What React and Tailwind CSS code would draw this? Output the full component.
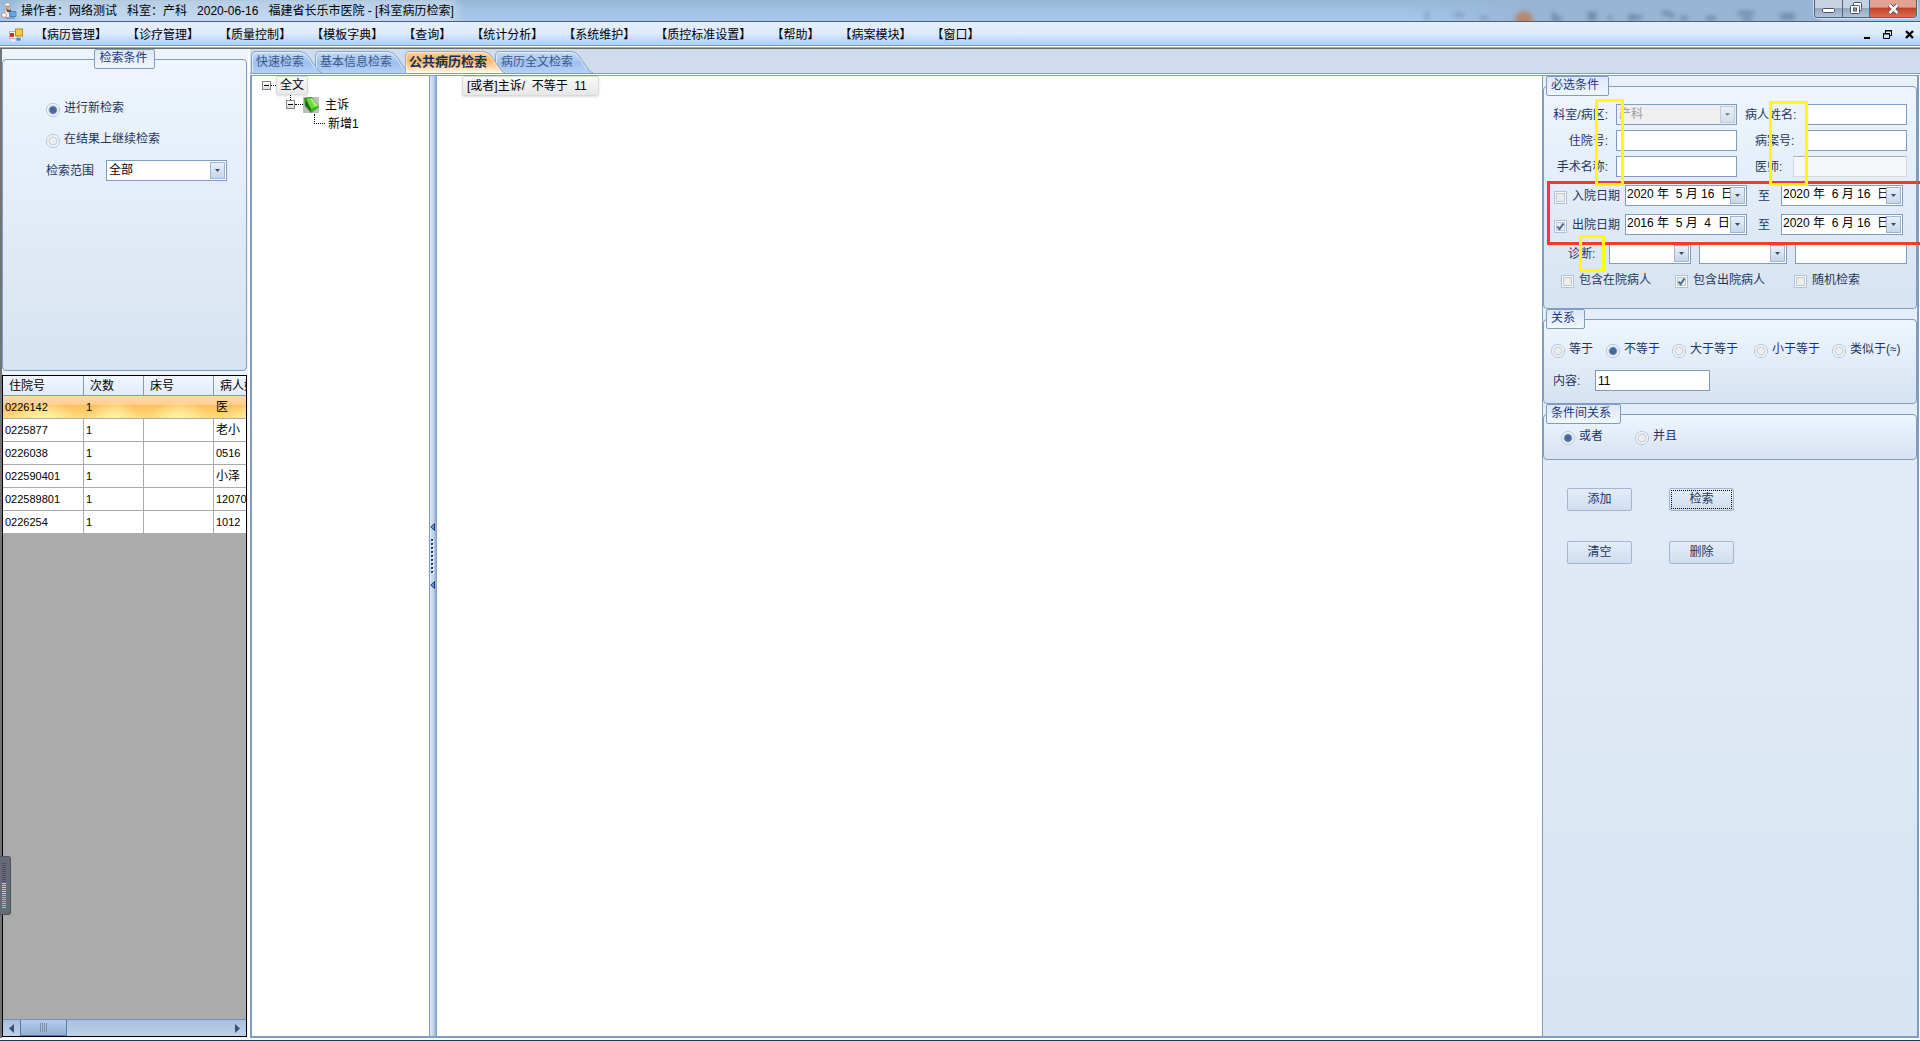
import React from "react";

const MENUS = ["病历管理", "诊疗管理", "质量控制", "模板字典", "查询", "统计分析", "系统维护", "质控标准设置", "帮助", "病案模块", "窗口"];

const TABS = [
  { text: "快速检索", w: 71, cls: "z-20 w-[71px]", label: "pl-[5px]" },
  { text: "基本信息检索", w: 95, cls: "z-10 -ml-[7px] w-[95px]", label: "pl-[5px]" },
  { text: "公共病历检索", w: 100, cls: "z-30 -ml-[5px] w-[100px]", label: "pl-[4px] text-[13px] font-bold text-[#15305a]", active: true },
  { text: "病历全文检索", w: 98, cls: "z-0 -ml-[10px] w-[98px]", label: "pl-[6px]" },
];

const ROWS = [
  ["0226142", "1", "", "医"],
  ["0225877", "1", "", "老小"],
  ["0226038", "1", "", "0516"],
  ["022590401", "1", "", "小泽"],
  ["022589801", "1", "", "120701"],
  ["0226254", "1", "", "1012"],
];

function Tab({ tab }) {
  const { w } = tab;
  const id = tab.active ? "tabHot" : "tabCool";
  const stops = tab.active
    ? [["0", "#fbd0a0"], ["0.4", "#fdb767"], ["0.55", "#fdc27c"], ["1", "#fffaf2"]]
    : [["0", "#c6dbf7"], ["0.4", "#a9c9f3"], ["0.5", "#9dc0ef"], ["1", "#b4d2f5"]];
  return (
    <button type="button" role="tab" aria-selected={!!tab.active} className={`relative h-[22px] shrink-0 text-left ${tab.cls}`}>
      <svg aria-hidden="true" className="absolute inset-0" width={w} height="22" viewBox={`0 0 ${w} 22`}>
        <defs>
          <linearGradient id={id + w} x1="0" y1="0" x2="0" y2="1">
            {stops.map(([o, c]) => <stop key={o} offset={o} stopColor={c} />)}
          </linearGradient>
        </defs>
        <path
          d={`M0.5 22V5Q0.5 0.5 5 0.5H${w - 22}Q${w - 17} 0.5 ${w - 13} 6L${w - 5} 18Q${w - 3} 21 ${w} 22`}
          fill={`url(#${id + w})`} stroke={tab.active ? "#b0a6a0" : "#86a4cc"}
        />
        <path d={`M1.5 21V5Q2 1.5 5 1.5H${w - 22}Q${w - 18} 1.5 ${w - 14} 6.5L${w - 6} 18.5`} fill="none" stroke="#ffffff" strokeOpacity="0.6" />
      </svg>
      <span className={`relative block whitespace-nowrap text-[#3b5888] ${tab.label}`}>{tab.text}</span>
    </button>
  );
}

function Arrow() {
  return (
    <svg width="5" height="3" viewBox="0 0 5 3" aria-hidden="true"><path d="M0 0H5L2.5 3Z" fill="#3c4a5e" /></svg>
  );
}

const arrowBox = "flex w-[15px] shrink-0 items-center justify-center border border-[#9db6d8] bg-linear-to-b from-[#e8f0fa] to-[#c5d6ea]";

function Select({ width, value = "", disabled, label, id }) {
  return (
    <div className={`relative h-[21px] shrink-0 ${width}`}>
      <select
        id={id} aria-label={label} disabled={disabled} defaultValue={value}
        className="h-full w-full appearance-none border border-[#7f9dc1] bg-white pl-[2px] text-[12px] leading-[17px] text-black disabled:bg-[#efefef] disabled:text-[#a0a0a0] disabled:opacity-100"
      >
        <option value={value}>{value}</option>
      </select>
      <span className={`pointer-events-none absolute inset-y-[2px] right-[2px] ${arrowBox} ${disabled ? "opacity-60" : ""}`}><Arrow /></span>
    </div>
  );
}

function TextBox({ id, label, cls = "", value = "" }) {
  return (
    <input id={id} aria-label={label} type="text" defaultValue={value}
      className={`h-[21px] min-w-0 border border-[#7f9dc1] bg-white px-[2px] text-[12px] text-black ${cls}`} />
  );
}

function DateBox({ value, label }) {
  return (
    <div className="flex h-[21px] w-[122px] shrink-0 border border-[#7f9dc1] bg-white p-px">
      <input type="text" aria-label={label} defaultValue={value}
        className="min-w-0 flex-1 overflow-hidden pb-[3px] text-[12px] leading-[14px] text-black" />
      <button type="button" aria-label={`选择${label}`} className={arrowBox}><Arrow /></button>
    </div>
  );
}

function Radio({ name, text, checked, cls = "" }) {
  return (
    <label className={`flex shrink-0 items-start gap-1 whitespace-nowrap leading-4 ${cls}`}>
      <input
        type="radio" name={name} defaultChecked={checked}
        className="mt-[3px] size-[14px] shrink-0 appearance-none rounded-full border border-[#abc3e3] bg-[radial-gradient(circle,#ececec_0_3px,#c3c7cc_4px,#f8fafd_5px)] checked:bg-[radial-gradient(circle,#47689c_0_3px,#9fb2cd_4px,#f8fafd_5px)]"
      />
      <span>{text}</span>
    </label>
  );
}

function Check({ text, checked, cls = "" }) {
  return (
    <label className={`flex shrink-0 items-start gap-[5px] whitespace-nowrap leading-4 ${cls}`}>
      <span className="relative mt-[3px] size-[13px] shrink-0">
        <input type="checkbox" defaultChecked={checked}
          className="peer block size-[13px] appearance-none border border-[#abc3e3] bg-[#ececec] shadow-[inset_0_0_0_1px_#f8fafd,inset_0_0_0_2px_#c3c7cc]" />
        <svg className="pointer-events-none absolute inset-0 hidden peer-checked:block" width="13" height="13" viewBox="0 0 13 13" aria-hidden="true">
          <path d="M3.5 6.5L5.5 9L9.5 3.5" fill="none" stroke="#47689c" strokeWidth="2" />
        </svg>
      </span>
      <span>{text}</span>
    </label>
  );
}

function Group({ title, center, cls = "", children }) {
  return (
    <fieldset className={`min-w-0 rounded-[4px] border border-[#7f9dc1] bg-linear-to-b from-[#eef5fe] to-[#d7e3f1] ${cls}`}>
      <legend className={`h-5 rounded-[2px] border border-[#7f9dc1] bg-linear-to-b from-[#dde8f6] to-[#f1f6fd] pl-1 text-[12px] leading-[17px] text-[#1d3a80] ${center ? "mx-auto px-[6px]" : "ml-[2px] pr-[9px]"}`}>{title}</legend>
      {children}
    </fieldset>
  );
}

function Expander() {
  return (
    <button type="button" aria-label="折叠" className="flex size-[9px] shrink-0 items-center justify-center border border-[#848484] bg-linear-to-b from-white to-[#dcdcdc]">
      <span className="h-px w-[5px] bg-black" />
    </button>
  );
}

function TitleBar() {
  return (
    <header className="relative flex h-[22px] shrink-0 items-center overflow-hidden border-b border-[#4d5f78] bg-linear-to-b from-[#98b7d5] via-[#a2c2e5] to-[#a9c9ec]">
      <svg className="absolute right-[100px] top-0 h-[21px] w-[420px]" viewBox="0 0 420 21" aria-hidden="true">
        <defs>
          <filter id="soft" x="-20%" y="-20%" width="140%" height="140%"><feGaussianBlur stdDeviation="2" /></filter>
          <linearGradient id="shade"><stop offset="0" stopColor="#98b5d6" stopOpacity="0" /><stop offset="0.3" stopColor="#98b5d6" /></linearGradient>
        </defs>
        <rect width="420" height="21" fill="url(#shade)" />
        <g filter="url(#soft)" stroke="#5f7b9c" strokeWidth="4" fill="none" opacity="0.75">
          <path d="M27 12V20M54 15H64M80 18H88" opacity="0.6" />
          <circle cx="124" cy="20" r="9" fill="#c07a48" stroke="none" />
          <path d="M154 12V20L162 18M188 12L196 20M196 12L188 20M208 18H212M232 14V21M228 17H242M262 13H268L274 17M280 18H288M306 18H316M338 13H354M342 19H352" />
          <rect x="380" y="13" width="15" height="7" fill="#6b84a2" stroke="none" />
        </g>
      </svg>
      <svg className="relative ml-px shrink-0" width="16" height="17" viewBox="0 0 16 17" aria-hidden="true">
        <path d="M4 4Q6 1 9 3L9 7L5 7Z" fill="#d9a77c" />
        <path d="M3 3Q6 -1 9 2L9 4L4 4Z" fill="#fafafa" stroke="#8a7a78" strokeWidth="0.6" />
        <path d="M4 7L9 6L10 11L8 16L4 15Z" fill="#f4f4f6" stroke="#8f98a8" strokeWidth="0.6" />
        <path d="M5 7L10 8L10 10L6 10Z" fill="#7c3a2e" />
        <circle cx="3" cy="13" r="2.4" fill="#fff" stroke="#c25b5b" strokeWidth="0.7" />
        <path d="M8 9.500H15V14.500H9Z" fill="#5aa5e6" stroke="#2d6fae" strokeWidth="0.8" /><path d="M5 16H14" stroke="#6b7a8c" />
      </svg>
      <h1 className="relative ml-1 flex gap-[10px] whitespace-nowrap rounded-lg bg-white/30 text-[12px] font-normal leading-5 text-black shadow-[0_0_8px_4px_rgba(255,255,255,0.3)]">
        <span>操作者：网络测试</span><span>科室：产科</span><span>2020-06-16</span><span>福建省长乐市医院 - [科室病历检索]</span>
      </h1>
      <div className="relative mb-auto ml-auto mr-[3px] flex h-[18px] overflow-hidden rounded-b-[4px] border border-t-0 border-[#50617a] shadow-[0_0_0_1px_rgba(255,255,255,0.5)]">
        <button type="button" aria-label="最小化" className="flex w-[28px] items-center justify-center border-r border-[#50617a] bg-linear-to-b from-[#c5d2e2] from-45% via-[#94a8c1] via-50% to-[#b4c4d8]">
          <svg width="13" height="6" viewBox="0 0 13 6" className="mt-1"><rect x="0.5" y="0.5" width="12" height="4" rx="1" fill="#fff" stroke="#4b5568" /></svg>
        </button>
        <button type="button" aria-label="还原" className="flex w-[27px] items-center justify-center border-r border-[#50617a] bg-linear-to-b from-[#c5d2e2] from-45% via-[#94a8c1] via-50% to-[#b4c4d8]">
          <svg width="13" height="13" viewBox="0 0 13 13">
            <rect x="3.5" y="0.5" width="8" height="8" rx="1" fill="#fff" stroke="#4b5568" />
            <rect x="0.5" y="3.5" width="9" height="8" rx="1" fill="#fff" stroke="#4b5568" />
            <rect x="3.5" y="6" width="3" height="3" fill="#94a8c1" stroke="#4b5568" />
          </svg>
        </button>
        <button type="button" aria-label="关闭" className="flex w-[46px] items-center justify-center bg-linear-to-b from-[#e0a292] from-40% via-[#c4412b] via-50% to-[#d9704e]">
          <svg width="13" height="12" viewBox="0 0 13 12"><path d="M2.5 2L10.5 10M10.5 2L2.5 10" stroke="#5a4450" strokeWidth="4.5" /><path d="M2.5 2L10.5 10M10.5 2L2.5 10" stroke="#fff" strokeWidth="2.6" /></svg>
        </button>
      </div>
    </header>
  );
}

function MenuBar() {
  return (
    <nav className="flex h-[24px] shrink-0 items-center border-b border-[#7c9cc8] bg-linear-to-b from-[#e6effc] via-[#dcebfd] to-[#a9cdfb] pt-[2px]">
      <svg className="ml-[9px] shrink-0" width="14" height="14" viewBox="0 0 14 14" aria-hidden="true">
        <rect x="0.5" y="3.5" width="8" height="7" fill="#f6f6f6" stroke="#b9b9b9" /><rect x="1" y="5" width="4" height="4" fill="#d0301c" />
        <rect x="6.5" y="1" width="7" height="7" fill="#fbc93c" stroke="#b98a1a" />
        <rect x="7" y="9.5" width="5" height="3.5" fill="#4a86e8" stroke="#dfe7f5" strokeWidth="0.6" /><path d="M2 11.5H6V13.5H2Z" fill="#eee" />
      </svg>
      <ul className="ml-[12px] flex gap-5">
        {MENUS.map((m) => (
          <li key={m}><button type="button" className="block whitespace-nowrap text-[12px] leading-5 text-black">【{m}】</button></li>
        ))}
      </ul>
      <div className="ml-auto mr-[6px] flex items-end gap-[13px]">
        <button type="button" aria-label="最小化子窗口"><svg className="block" width="6" height="9" viewBox="0 0 6 9"><path d="M0 7H6V9H0Z" /></svg></button>
        <button type="button" aria-label="还原子窗口">
          <svg className="block" width="9" height="9" viewBox="0 0 9 9" fill="none" stroke="#000"><path d="M2.5 3V0.5H8.5V5.5H6.5M2 1H9M0.5 3.5H6.5V8.5H0.5ZM0 4H7" /></svg>
        </button>
        <button type="button" aria-label="关闭子窗口"><svg className="block" width="9" height="9" viewBox="0 0 9 9"><path d="M1 1L8 8M8 1L1 8" stroke="#000" strokeWidth="2.4" /></svg></button>
      </div>
    </nav>
  );
}

function LeftPane() {
  return (
    <section className="flex w-[248px] shrink-0 flex-col border-l-2 border-[#707478] bg-[#eef4fc] pb-px pr-px">
      <Group title="检索条件" center cls="h-[322px]">
        <div className="flex flex-col items-start pl-[43px] pt-[31px] text-[#1d365e]">
          <Radio name="mode" text="进行新检索" checked />
          <Radio name="mode" text="在结果上继续检索" cls="mt-[14px]" />
          <div className="mt-3 flex items-center">
            <label htmlFor="range" className="w-[60px]">检索范围</label>
            <Select id="range" width="w-[121px]" value="全部" />
          </div>
        </div>
      </Group>
      <div className="mt-1 flex min-h-0 flex-1 flex-col border border-black bg-[#ababab]">
        <div className="min-h-0 flex-1 overflow-hidden">
          <table className="w-[311px] table-fixed border-separate border-spacing-0 text-left text-black">
            <colgroup><col className="w-[81px]" /><col className="w-[60px]" /><col className="w-[70px]" /><col className="w-[100px]" /></colgroup>
            <thead>
              <tr>
                {["住院号", "次数", "床号", "病人姓名"].map((h) => (
                  <th key={h} className="h-[20px] whitespace-nowrap border-b border-r border-[#7f9dc1] bg-linear-to-b from-[#f2f7fe] to-[#e1ebf9] pl-[6px] text-[12px] font-normal leading-4">{h}</th>
                ))}
              </tr>
            </thead>
            <tbody>
              {ROWS.map((r, i) => (
                <tr key={r[0]}>
                  {r.map((c, j) => (
                    <td key={j} className={`h-[23px] whitespace-nowrap border-b border-[#ababab] pl-[2px] leading-4 ${/^\d/.test(c) ? "text-[11px]" : "text-[12px]"} ${i === 0 ? "bg-[radial-gradient(ellipse_at_50%_115%,#fff2a6_10%,transparent_60%),linear-gradient(#fbd8ae,#ffcf8f_38%,#ffbf5c_42%,#ffdc80)]" : "border-r bg-white"}`}>{c}</td>
                  ))}
                </tr>
              ))}
            </tbody>
          </table>
        </div>
        <div className="flex h-[17px] shrink-0 items-stretch border-t border-[#6f90b8] bg-linear-to-b from-[#a9c0dd] to-[#bdd0e8]">
          <button type="button" aria-label="向左滚动" className="flex w-[17px] items-center justify-center"><svg width="5" height="9" viewBox="0 0 5 9"><path d="M5 0V9L0 4.5Z" fill="#3e5078" /></svg></button>
          <div className="flex w-[47px] items-center justify-center gap-px border border-t-0 border-[#567ba8] bg-linear-to-b from-[#b5cce8] to-[#92b0d3]">
            {[0, 1, 2, 3].map((i) => <span key={i} className="h-[9px] w-px bg-[#7f8ea3]" />)}
          </div>
          <button type="button" aria-label="向右滚动" className="ml-auto flex w-[17px] items-center justify-center"><svg width="5" height="9" viewBox="0 0 5 9"><path d="M0 0V9L5 4.5Z" fill="#3e5078" /></svg></button>
        </div>
      </div>
    </section>
  );
}

function Tree() {
  return (
    <ul className="w-[177px] shrink-0 bg-white text-[12px] leading-4 text-black">
      <li className="flex h-[19px] items-center pl-[10px]">
        <Expander /><span className="w-[5px] border-t border-dotted border-black" />
        <button type="button" className="h-[19px] rounded-[2px] border border-[#dadada] bg-linear-to-b from-[#fafafa] to-[#e8e8e8] px-[3px] leading-[15px] shadow-sm">全文</button>
      </li>
      <li className="flex h-[19px] items-center pl-[34px]">
        <span className="flex h-full flex-col items-center"><span className="h-[5px] border-l border-dotted border-black" /><Expander /></span>
        <span className="w-[8px] border-t border-dotted border-black" />
        <svg width="16" height="16" viewBox="0 0 16 16" aria-hidden="true">
          <rect width="16" height="16" fill="#bdbdbd" />
          <path d="M1 1L9 0L16 10L8 16L2 9Z" fill="#2f9a1c" />
          <path d="M3 2L9 1L15 9L8 12Z" fill="#6ed83c" /><path d="M9 1L15 9L12 10L7 2Z" fill="#a5ee6e" />
          <path d="M3 2L8 12L8 15L2 8Z" fill="#1c7411" /><path d="M8 12L15 9L15 11L8 15Z" fill="#3bb322" />
        </svg>
        <button type="button" className="pl-[6px]">主诉</button>
      </li>
      <li className="flex h-[19px] items-center pl-[62px]">
        <span className="mr-[3px] h-[10px] w-[11px] self-start border-b border-l border-dotted border-black" />
        <button type="button">新增1</button>
      </li>
    </ul>
  );
}

function Splitter() {
  const arrow = <svg width="5" height="8" viewBox="0 0 5 8" aria-hidden="true"><path d="M4.500 0.500V7.500L0.800 4Z" fill="#6f95cc" stroke="#1d3a7a" /></svg>;
  return (
    <div className="flex w-[8px] shrink-0 flex-col items-start justify-center gap-2 border-l border-[#7f9dc1] bg-linear-to-r from-[#dce8f6] via-[#c0d2e8] to-[#7b9ac4]">
      {arrow}
      <div className="ml-px flex flex-col gap-[2px]">
        {[0, 1, 2, 3, 4, 5, 6, 7, 8].map((i) => <span key={i} className="size-[2px] bg-[#1d3a7a] shadow-[1px_1px_0_#ffffff]" />)}
      </div>
      {arrow}
    </div>
  );
}

const row = "flex items-center pr-[9px]";
const leftLabel = "mr-2 w-[64px] shrink-0 whitespace-nowrap text-right";

function RightPane() {
  return (
    <aside className="w-[375px] shrink-0 border-l border-[#7f9dc1] bg-linear-to-b from-[#e8f0fa] to-[#d8e4f2] text-[12px] leading-4 text-[#1d365e]">
      <div className="relative">
        <Group title="必选条件">
          <div className="flex flex-col gap-2 pb-5 pt-2">
            <div className="flex flex-col gap-[5px]">
              <div className={row}>
                <label htmlFor="dept" className={leftLabel}>科室/病区:</label>
                <Select id="dept" width="w-[121px]" value="产科" disabled />
                <label htmlFor="pname" className="ml-2 w-[60px] shrink-0">病人姓名:</label>
                <TextBox id="pname" cls="w-0 flex-1" />
              </div>
              <div className={row}>
                <label htmlFor="inno" className={leftLabel}>住院号:</label>
                <TextBox id="inno" cls="w-[121px] shrink-0" />
                <label htmlFor="caseno" className="ml-[18px] w-[50px] shrink-0">病案号:</label>
                <TextBox id="caseno" cls="w-0 flex-1" />
              </div>
              <div className={row}>
                <label htmlFor="op" className={leftLabel}>手术名称:</label>
                <TextBox id="op" cls="w-[121px] shrink-0" />
                <label htmlFor="doctor" className="ml-[18px] w-[38px] shrink-0">医师:</label>
                <input id="doctor" type="text" className="h-[21px] w-0 min-w-0 flex-1 border border-[#d3dae3] border-t-[#abadb3] bg-[#f4f6f9] px-[2px]" />
              </div>
            </div>
            <div className={`${row} pl-[10px]`}>
              <Check text="入院日期" cls="w-[71px]" />
              <DateBox label="入院起始日期" value={"2020 年 \u00a05 月 16 \u00a0日"} />
              <span className="w-[34px] shrink-0 text-center">至</span>
              <DateBox label="入院截止日期" value={"2020 年 \u00a06 月 16 \u00a0日"} />
            </div>
            <div className={`${row} pl-[10px]`}>
              <Check text="出院日期" checked cls="w-[71px]" />
              <DateBox label="出院起始日期" value={"2016 年 \u00a05 月 \u00a04 \u00a0日"} />
              <span className="w-[34px] shrink-0 text-center">至</span>
              <DateBox label="出院截止日期" value={"2020 年 \u00a06 月 16 \u00a0日"} />
            </div>
            <div className={`${row} gap-2 pl-6`}>
              <label htmlFor="diag" className="w-[33px] shrink-0">诊断:</label>
              <Select id="diag" width="w-[82px]" />
              <Select width="w-[88px]" label="诊断条件" />
              <TextBox label="诊断内容" cls="w-0 flex-1" />
            </div>
            <div className="flex pl-[17px]">
              <Check text="包含在院病人" cls="w-[114px]" />
              <Check text="包含出院病人" checked cls="w-[119px]" />
              <Check text="随机检索" />
            </div>
          </div>
        </Group>
        <div className="pointer-events-none absolute left-[4px] right-[-6px] top-[105px] h-[64px] border-[3px] border-[#ff3535]" />
        <div className="pointer-events-none absolute left-[52px] top-[23px] h-[87px] w-[29px] border-[3px] border-[#ffff00]" />
        <div className="pointer-events-none absolute left-[226px] top-[25px] h-[85px] w-[39px] border-[3px] border-[#ffff00]" />
        <div className="pointer-events-none absolute left-[36px] top-[159px] h-[37px] w-[26px] border-[3px] border-[#ffff00]" />
      </div>
      <Group title="关系">
        <div className="pb-3 pl-[7px] pt-3">
          <div className="flex">
            <Radio name="rel" text="等于" cls="w-[55px]" />
            <Radio name="rel" text="不等于" checked cls="w-[66px]" />
            <Radio name="rel" text="大于等于" cls="w-[82px]" />
            <Radio name="rel" text="小于等于" cls="w-[78px]" />
            <Radio name="rel" text="类似于(≈)" />
          </div>
          <div className="mt-3 flex items-center">
            <label htmlFor="content" className="ml-[2px] w-[42px] shrink-0">内容:</label>
            <TextBox id="content" value="11" cls="w-[115px]" />
          </div>
        </div>
      </Group>
      <Group title="条件间关系">
        <div className="flex pb-[14px] pl-[17px] pt-1">
          <Radio name="join" text="或者" checked cls="w-[74px]" />
          <Radio name="join" text="并且" />
        </div>
      </Group>
      <div className="grid grid-cols-[65px_65px] gap-x-[37px] gap-y-[30px] pl-6 pt-7">
        {["添加", "检索", "清空", "删除"].map((t) => (
          <button key={t} type="button" className="h-[23px] rounded-[2px] border border-[#a3b5d3] bg-linear-to-b from-[#e3edf9] to-[#cfdeee] p-px">
            <span className={`flex h-full items-center justify-center pb-[2px] ${t === "检索" ? "border border-dotted border-black" : ""}`}>{t}</span>
          </button>
        ))}
      </div>
    </aside>
  );
}

function LevelHandle() {
  return (
    <div className="absolute left-0 top-[856px] flex h-[59px] w-[11px] flex-col justify-center gap-px rounded-r-[3px] border border-l-0 border-[#4e5158] bg-[#666a76] pl-[2px]">
      {Array.from({ length: 10 }, (_, i) => <span key={i} className="h-px w-[4px] bg-[#4c4f59]" />)}
      {Array.from({ length: 6 }, (_, i) => <span key={i} className="h-px w-[4px] bg-[#cfd283]" />)}
      {Array.from({ length: 7 }, (_, i) => <span key={i} className="h-px w-[4px] bg-[#83cbbb]" />)}
    </div>
  );
}

export default function App() {
  return (
    <div className="relative flex h-screen w-full flex-col overflow-hidden border-b border-[#1f3a52] bg-white font-['Liberation_Sans','Noto_Sans_CJK_SC',sans-serif] text-[12px] leading-4">
      <TitleBar />
      <MenuBar />
      <div className="mt-px h-[2px] shrink-0 border-b border-[#696b66] bg-[#a3a6a6]" />
      <div className="mb-[2px] flex min-h-0 flex-1">
        <LeftPane />
        <main className="flex min-w-0 flex-1 flex-col bg-white">
          <div role="tablist" className="ml-[2px] flex h-[25px] shrink-0 items-end border-b border-[#7f9dc1] bg-[#cfdcee] pl-px">
            {TABS.map((t) => <Tab key={t.text} tab={t} />)}
          </div>
          <div className="ml-[2px] mr-px mt-px flex min-h-0 flex-1 border-2 border-t border-[#7f9dc1]">
            <Tree />
            <Splitter />
            <div className="min-w-0 flex-1 bg-white pl-[25px]">
              <button type="button" className="block h-[20px] w-[137px] rounded-[2px] border border-[#dadada] bg-linear-to-b from-[#fafafa] to-[#e6e6e6] pl-1 text-left leading-4 text-black shadow-sm">[或者]主诉/ &nbsp;不等于 &nbsp;11</button>
            </div>
            <RightPane />
          </div>
        </main>
      </div>
      <LevelHandle />
    </div>
  );
}
